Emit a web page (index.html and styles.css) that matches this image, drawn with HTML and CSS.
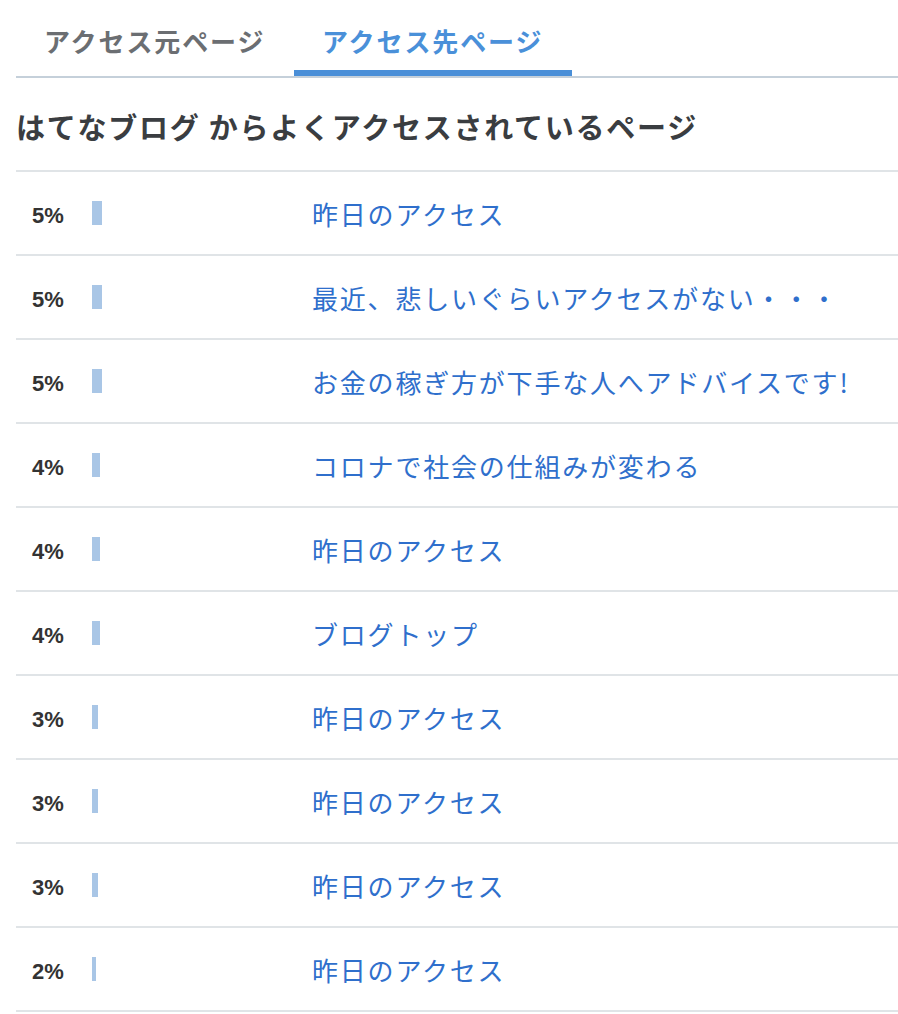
FILE: index.html
```html
<!DOCTYPE html>
<html lang="ja">

<head>
    <meta charset="UTF-8">
    <meta name="viewport" content="width=device-width, initial-scale=1.0">
    <title>アクセス先ページ</title>
    <link rel="stylesheet" href="styles.css">
</head>

<body>
    <div id="accessWrap">
        <!-- 탭 -->
        <ul class="tabs">
            <li><a href="#">アクセス元ページ</a></li>
            <li><a href="#" class="active">アクセス先ページ</a></li>
        </ul>

        <h2 class="title">はてなブログ からよくアクセスされているページ</h2>

        <!-- 목록 -->
        <ul class="pageList">
            <li>
                <span class="pct">5%</span>
                <span class="bar"><i style="width: 5%"></i></span>
                <a href="#">昨日のアクセス</a>
            </li>
            <li>
                <span class="pct">5%</span>
                <span class="bar"><i style="width: 5%"></i></span>
                <a href="#">最近、悲しいぐらいアクセスがない・・・</a>
            </li>
            <li>
                <span class="pct">5%</span>
                <span class="bar"><i style="width: 5%"></i></span>
                <a href="#">お金の稼ぎ方が下手な人へアドバイスです!</a>
            </li>
            <li>
                <span class="pct">4%</span>
                <span class="bar"><i style="width: 4%"></i></span>
                <a href="#">コロナで社会の仕組みが変わる</a>
            </li>
            <li>
                <span class="pct">4%</span>
                <span class="bar"><i style="width: 4%"></i></span>
                <a href="#">昨日のアクセス</a>
            </li>
            <li>
                <span class="pct">4%</span>
                <span class="bar"><i style="width: 4%"></i></span>
                <a href="#">ブログトップ</a>
            </li>
            <li>
                <span class="pct">3%</span>
                <span class="bar"><i style="width: 3%"></i></span>
                <a href="#">昨日のアクセス</a>
            </li>
            <li>
                <span class="pct">3%</span>
                <span class="bar"><i style="width: 3%"></i></span>
                <a href="#">昨日のアクセス</a>
            </li>
            <li>
                <span class="pct">3%</span>
                <span class="bar"><i style="width: 3%"></i></span>
                <a href="#">昨日のアクセス</a>
            </li>
            <li>
                <span class="pct">2%</span>
                <span class="bar"><i style="width: 2%"></i></span>
                <a href="#">昨日のアクセス</a>
            </li>
        </ul>
    </div>
</body>

</html>
```

FILE: styles.css
```css
/* 초기화 */
* {
    box-sizing: border-box;
}

body {
    margin: 0;
    background: #fff;
    font-family: "Noto Sans CJK JP", "Noto Sans", sans-serif;
}

ul {
    list-style: none;
    padding: 0;
    margin: 0;
}

a {
    text-decoration: none;
}

#accessWrap {
    padding-left: 16px;
}

/* 탭 */
#accessWrap .tabs {
    display: flex;
    border-bottom: 2px solid #c5d0da;
}

#accessWrap .tabs a {
    display: block;
    width: 278px;
    padding: 16px 0 4px 28px;
    line-height: 50px;
    font-size: 26px;
    font-weight: bold;
    letter-spacing: 1.9px;
    color: #6b6e72;
    border-bottom: 6px solid transparent;
}

#accessWrap .tabs a.active {
    color: #4a90d9;
    border-bottom-color: #4a8fd8;
}

/* 제목 */
#accessWrap .title {
    margin: 26px 0 22px;
    line-height: 44px;
    font-size: 29px;
    font-weight: bold;
    letter-spacing: 1.75px;
    color: #3a3d41;
}

/* 목록 */
#accessWrap .pageList {
    border-top: 2px solid #e0e4e7;
}

#accessWrap .pageList li {
    display: flex;
    align-items: center;
    height: 84px;
    padding-left: 16px;
    border-bottom: 2px solid #e0e4e7;
}

#accessWrap .pct {
    width: 60px;
    padding-top: 6px;
    font-family: "Liberation Sans", Arial, sans-serif;
    font-size: 22px;
    font-weight: bold;
    color: #333;
}

#accessWrap .bar {
    display: block;
    width: 200px;
    height: 24px;
    margin-right: 20px;
}

#accessWrap .bar i {
    display: block;
    height: 100%;
    background: #a9c6e6;
}

#accessWrap .pageList a {
    font-size: 26px;
    letter-spacing: 1.8px;
    color: #2f6fcc;
}
```
